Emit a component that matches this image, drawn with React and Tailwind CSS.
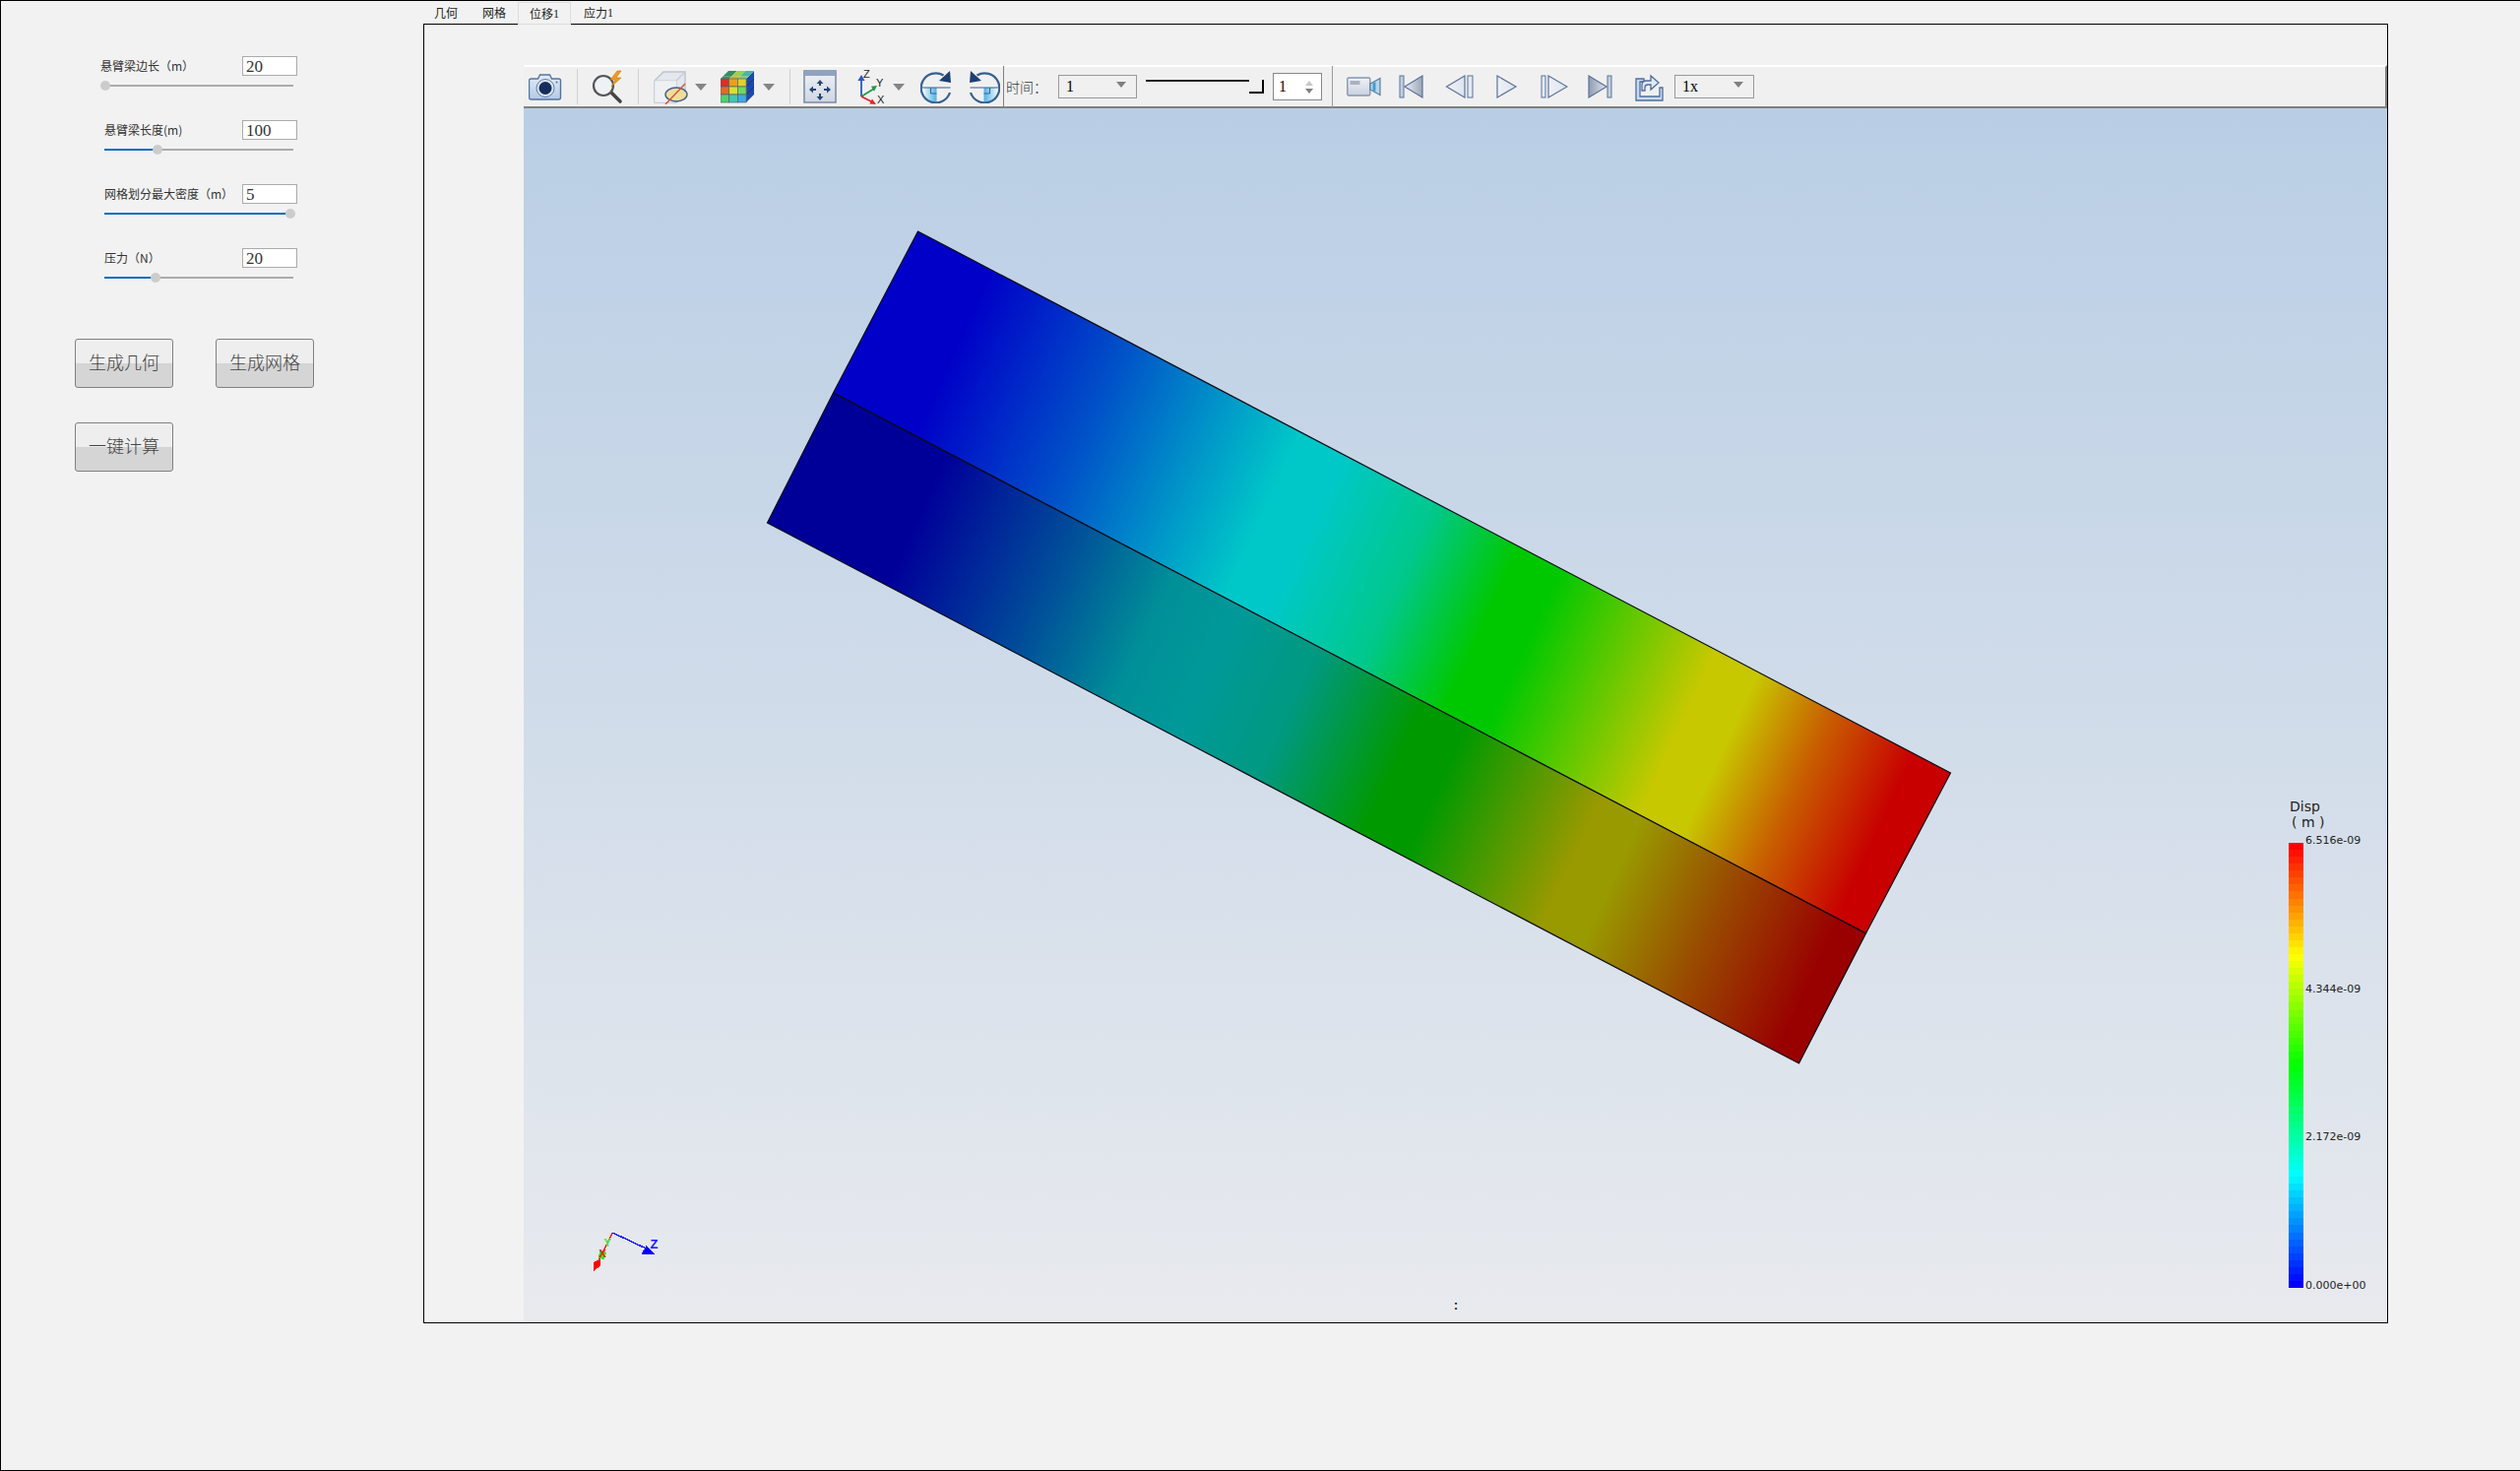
import React from 'react';

const cjk = "font-['Noto_Sans_CJK_SC',sans-serif]";
const serif = "font-['Liberation_Serif','Noto_Sans_CJK_SC',serif]";

const params = [
  { label: '悬臂梁边长（m）', value: '20', thumb: 1, pad: 'pl-0' },
  { label: '悬臂梁长度(m)', value: '100', thumb: 54, pad: 'pl-[4px]' },
  { label: '网格划分最大密度（m）', value: '5', thumb: 189, pad: 'pl-[4px]' },
  { label: '压力（N）', value: '20', thumb: 52, pad: 'pl-[4px]' },
];

const rainbow = (s) => {
  const c = (v) => Math.round(Math.max(0, Math.min(1, v)) * 255);
  const g = s < 0.25 ? s * 4 : s < 0.75 ? 1 : (1 - s) * 4;
  const b = s < 0.25 ? 1 : s < 0.5 ? (0.5 - s) * 4 : 0;
  const r = s < 0.5 ? 0 : s < 0.75 ? (s - 0.5) * 4 : 1;
  return `rgb(${c(r)},${c(g)},${c(b)})`;
};

const ParamRow = ({ label, value, thumb, pad }) => (
  <div className="flex flex-col">
    <div className="flex items-center justify-between h-[20px]">
      <span className={`${pad} ${cjk} text-[12px] leading-none text-[#333]`}>{label}</span>
      <div className={`w-[56px] h-[20px] bg-white border border-[#aaa] pl-[3px] pt-px ${serif} text-[17px] leading-[18px] text-[#333]`}>{value}</div>
    </div>
    <div className="relative ml-[4px] mt-[9px] w-[192px] h-[2px] bg-[#aaa]">
      <div className="h-full bg-[#0f6cbd]" style={{ width: thumb }} />
      <div className="absolute top-[-4px] w-[10px] h-[10px] rounded-full bg-[#ccc]" style={{ left: thumb - 5 }} />
    </div>
  </div>
);

const ActionButton = ({ children }) => (
  <button className={`w-[100px] h-[50px] pb-[3px] rounded-[3px] border border-[#808080] bg-[linear-gradient(#eeeeee_50%,#d5d5d5_50%)] ${cjk} font-light text-[18px] text-[#444]`}>
    {children}
  </button>
);

const Sep = ({ className }) => <div className={`w-px h-[36px] bg-[#d0d0d0] ${className}`} />;

const Caret = ({ className }) => (
  <svg width="12" height="7" viewBox="0 0 12 7" className={`${className} shrink-0`}><path d="M0 0h12L6 7z" fill="#858585" /></svg>
);

const Combo = ({ width, text, caretClass }) => (
  <div className={`${width} h-[24px] border border-[#999] flex items-center justify-between ${serif} text-[16px] text-black`}>
    <span className="pl-[7px] leading-none">{text}</span>
    <svg width="10" height="6" viewBox="0 0 10 6" className={caretClass}><path d="M0 0h10L5 6z" fill="#808080" /></svg>
  </div>
);

const CameraIcon = () => (
  <svg width="34" height="28" viewBox="0 0 34 28" className="ml-[5px] shrink-0">
    <defs>
      <linearGradient id="camBody" x1="0" y1="0" x2="0" y2="1"><stop offset="0" stopColor="#e3ecf7" /><stop offset="1" stopColor="#b4c9e3" /></linearGradient>
    </defs>
    <path d="M2.5 6h7l2-4h10l2 4h7a2 2 0 0 1 2 2v17a2 2 0 0 1-2 2h-28a2 2 0 0 1-2-2V8a2 2 0 0 1 2-2z" fill="url(#camBody)" stroke="#5273a0" strokeWidth="1.4" />
    <circle cx="17" cy="15.5" r="9" fill="#d9e4f2" stroke="#5f7ea8" />
    <circle cx="17" cy="15.5" r="6.5" fill="#152c5c" />
    <circle cx="28.5" cy="9.5" r="1" fill="#5273a0" />
  </svg>
);

const LightningLensIcon = () => (
  <svg width="36" height="36" viewBox="0 0 36 36" className="ml-[13px] shrink-0">
    <path d="M18 21l3 3 9 9" stroke="#444" strokeWidth="3.6" strokeLinecap="round" fill="none" />
    <circle cx="13" cy="17" r="10" fill="#eef2f6" stroke="#555" strokeWidth="2.2" />
    <path d="M27 2l-7 9h5l-4 7 10-9h-5l5-7z" fill="#ef9a1e" stroke="#c9741a" strokeWidth="0.6" />
  </svg>
);

const ClipBoxIcon = () => (
  <svg width="36" height="36" viewBox="0 0 36 36" className="ml-[14px] shrink-0">
    <path d="M2 12l9-9h22v22l-9 9H2z" fill="#e4e8ee" stroke="#bcc3ce" strokeWidth="1.4" />
    <path d="M2 12h22v22M24 12l9-9" fill="none" stroke="#c4cad4" strokeWidth="1.2" />
    <path d="M2 12h22v22H2z" fill="#f2f3f6" opacity="0.7" />
    <ellipse cx="24" cy="26" rx="11" ry="7" fill="#f0dc9c" stroke="#3f5f8a" strokeWidth="1.4" />
    <path d="M13 36L33 15" stroke="#d2552c" strokeWidth="1.4" />
  </svg>
);

const ColorCubeIcon = () => {
  const cells = [
    ['#d8302c', '#e8a020', '#e0d030'],
    ['#e06a28', '#d8e030', '#70d860'],
    ['#50d070', '#40c8b0', '#40a8e8'],
  ];
  return (
    <svg width="34" height="34" viewBox="0 0 34 34" className="ml-[14px] shrink-0">
      <path d="M26 9l8-8v24l-8 8z" fill="#1d4aa8" />
      <path d="M26 17l8-8M26 25l8-8" stroke="#10306c" strokeWidth="0.8" />
      <path d="M0 9l2.7-2.7h8.7L8.7 9z" fill="#3f8f78" />
      <path d="M8.7 9l2.7-2.7h8.7L17.4 9z" fill="#c9b33a" />
      <path d="M17.4 9l2.7-2.7h8.7L26 9z" fill="#7ecf6a" />
      <path d="M2.7 6.3L8 1h8.7l-5.3 5.3z" fill="#3a8a5c" />
      <path d="M11.4 6.3L16.7 1h8.7l-5.3 5.3z" fill="#9bcf55" />
      <path d="M20.1 6.3L25.4 1H34l-5.2 5.3z" fill="#49b6a6" />
      {cells.map((row, r) => row.map((fill, c) => (
        <rect key={`${r}-${c}`} x={c * 8.7} y={9 + r * 8} width="8.7" height="8" fill={fill} stroke="#5a5f66" strokeWidth="0.7" />
      )))}
    </svg>
  );
};

const FitIcon = () => (
  <svg width="34" height="34" viewBox="0 0 34 34" className="ml-[13px] shrink-0">
    <defs>
      <linearGradient id="fitBody" x1="0" y1="0" x2="0" y2="1"><stop offset="0" stopColor="#eef1f6" /><stop offset="1" stopColor="#cfd6e2" /></linearGradient>
    </defs>
    <rect x="1" y="1" width="32" height="32" fill="url(#fitBody)" stroke="#7d8fa9" strokeWidth="1.6" />
    <rect x="1" y="1" width="32" height="5" fill="#8fa3c0" />
    <path d="M17 10l-3.4 4h2.4v2h2v-2h2.4zM17 31l-3.4-4h2.4v-3h2v3h2.4zM6 20l4-3.4v2.4h3v2h-3v2.4zM28 20l-4-3.4v2.4h-3v2h3v2.4z" fill="#27456f" />
  </svg>
);

const TriadIcon = () => (
  <svg width="30" height="36" viewBox="0 0 30 36" className="ml-[20px] shrink-0">
    <path d="M5 28V10" stroke="#2a58c0" strokeWidth="1.8" />
    <path d="M5 6l-3.6 6h7.2z" fill="#2a58c0" />
    <path d="M5 28l13-8" stroke="#1d9a4a" strokeWidth="1.8" />
    <path d="M21 17l-6 .8 3 5z" fill="#1d9a4a" />
    <path d="M5 28l12 6" stroke="#e0262a" strokeWidth="1.8" />
    <path d="M20 36l-6.6-.4 2.6-5z" fill="#e0262a" />
    <text x="7" y="9" className="font-['Liberation_Sans',sans-serif]" fontSize="11" fill="#222">Z</text>
    <text x="20" y="18" className="font-['Liberation_Sans',sans-serif]" fontSize="11" fill="#222">Y</text>
    <text x="21" y="35" className="font-['Liberation_Sans',sans-serif]" fontSize="11" fill="#222">X</text>
  </svg>
);

const RotateIcon = ({ id, flip, className }) => (
  <svg width="32" height="34" viewBox="0 0 32 34" className={`${className} shrink-0 ${flip ? '-scale-x-100' : ''}`}>
    <defs>
      <linearGradient id={id} x1="0" y1="0" x2="1" y2="0"><stop offset="0" stopColor="#ffffff" /><stop offset="1" stopColor="#4fb0e6" /></linearGradient>
    </defs>
    <path d="M1.5 18h15v14.5A14.5 14.5 0 0 1 1.5 18z" fill={`url(#${id})`} />
    <path d="M10.5 18v6h6" fill="none" stroke="#35608f" strokeWidth="1" />
    <path d="M1.5 18h29" stroke="#35608f" strokeWidth="1" />
    <path d="M23.5 5.5A15 15 0 1 0 30 23" fill="none" stroke="#35608f" strokeWidth="2.2" />
    <path d="M30 1l1 12-12-2z" fill="#1d3f72" />
  </svg>
);

const VideoIcon = () => (
  <svg width="36" height="22" viewBox="0 0 36 22" className="ml-[14px] shrink-0">
    <defs>
      <linearGradient id="vidBody" x1="0" y1="0" x2="0" y2="1"><stop offset="0" stopColor="#f0f2f6" /><stop offset="1" stopColor="#c9d1de" /></linearGradient>
    </defs>
    <rect x="0.8" y="2" width="23" height="18" rx="1.5" fill="url(#vidBody)" stroke="#8395b0" strokeWidth="1.4" />
    <rect x="3.5" y="5" width="10" height="4" fill="#a9b2bf" />
    <path d="M24 8l10-5.5v17L24 14z" fill="#b9d6e8" stroke="#5d7ba2" strokeWidth="1.2" />
    <path d="M28 6.5v9" stroke="#3f9ed4" strokeWidth="3" />
  </svg>
);

const PlayerIcon = ({ kind, id, className }) => {
  const width = { start: 25, prev: 32, play: 23, next: 28, end: 25 }[kind];
  return (
    <svg width={width} height="24" viewBox={`0 0 ${width} 24`} className={`${className} shrink-0`}>
      <defs>
        <linearGradient id={id} x1="0" y1="0" x2="1" y2="0">
          <stop offset="0" stopColor={kind === 'end' ? '#8f9cb0' : '#eef1f6'} />
          <stop offset="1" stopColor={kind === 'start' ? '#98a5b8' : '#dfe5ee'} />
        </linearGradient>
      </defs>
      {kind === 'start' && <><rect x="1" y="1" width="4" height="22" fill="#c5cfdf" stroke="#5b7299" /><path d="M24 1v22L6 12z" fill={`url(#${id})`} stroke="#5b7299" strokeWidth="1.2" /></>}
      {kind === 'prev' && <><path d="M20 1v22L1.5 12z" fill={`url(#${id})`} stroke="#5b7299" strokeWidth="1.2" /><rect x="23" y="1" width="5" height="22" fill="#e4e9f1" stroke="#5b7299" /></>}
      {kind === 'play' && <path d="M1 1v22l19-11z" fill={`url(#${id})`} stroke="#5b7299" strokeWidth="1.2" />}
      {kind === 'next' && <><rect x="1" y="1" width="4" height="22" fill="#e4e9f1" stroke="#5b7299" /><path d="M8 1v22l19-11z" fill={`url(#${id})`} stroke="#5b7299" strokeWidth="1.2" /></>}
      {kind === 'end' && <><path d="M1 1v22l18-11z" fill={`url(#${id})`} stroke="#5b7299" strokeWidth="1.2" /><rect x="20" y="1" width="4" height="22" fill="#c5cfdf" stroke="#5b7299" /></>}
    </svg>
  );
};

const ExportIcon = () => (
  <svg width="30" height="30" viewBox="0 0 30 30" className="ml-[22px] shrink-0">
    <path d="M2 7h8v3H6v15h20v-9h3v13H2z" fill="#c9dbf0" stroke="#4d6d9b" strokeWidth="1.3" />
    <path d="M8 19v-6c0-3 2-4 5-4h4V4l8 7-8 7v-5h-3c-2 0-3 1-3 3v3z" fill="#dfe9f6" stroke="#4d6d9b" strokeWidth="1.3" />
  </svg>
);

const Toolbar = () => (
  <div className="h-[44px] shrink-0 flex items-center bg-[#f0f0f0] border-t-2 border-t-white border-b-2 border-b-[#808080] border-r-2 border-r-[#808080]">
    <CameraIcon />
    <Sep className="ml-[15px]" />
    <LightningLensIcon />
    <Sep className="ml-[12px]" />
    <ClipBoxIcon />
    <Caret className="ml-[7px]" />
    <ColorCubeIcon />
    <Caret className="ml-[9px]" />
    <Sep className="ml-[15px]" />
    <FitIcon />
    <TriadIcon />
    <Caret className="ml-[7px]" />
    <RotateIcon id="rotA" className="ml-[16px]" />
    <RotateIcon id="rotB" flip className="ml-[17px]" />
    <div className="w-px h-[42px] bg-[#808080] ml-[3px]" />
    <span className={`ml-[2px] ${cjk} font-light text-[14px] leading-none text-[#333] whitespace-nowrap`}>时间：</span>
    <div className="ml-[11px]"><Combo width="w-[80px]" text="1" caretClass="mr-[10px] -mt-[5px]" /></div>
    <div className="relative ml-[9px] w-[120px] h-[14px]">
      <div className="h-[2px] w-[106px] bg-[#222]" />
      <div className="absolute right-0 top-0 w-[15px] h-[14px] border-r-2 border-b-2 border-black bg-[#f0f0f0]" />
    </div>
    <div className="ml-[9px] w-[50px] h-[28px] bg-white border border-[#888] flex items-center justify-between pl-[5px] pr-[8px]">
      <span className={`${serif} text-[16px] leading-none text-[#300]`}>1</span>
      <div className="flex flex-col gap-[3px]">
        <svg width="8" height="5" viewBox="0 0 8 5"><path d="M0 5h8L4 0z" fill="#c8c8c8" /></svg>
        <svg width="8" height="5" viewBox="0 0 8 5"><path d="M0 0h8L4 5z" fill="#808080" /></svg>
      </div>
    </div>
    <div className="w-px h-[42px] bg-[#9a9a9a] ml-[10px]" />
    <VideoIcon />
    <PlayerIcon kind="start" id="pStart" className="ml-[17px]" />
    <PlayerIcon kind="prev" id="pPrev" className="ml-[22px]" />
    <PlayerIcon kind="play" id="pPlay" className="ml-[20px]" />
    <PlayerIcon kind="next" id="pNext" className="ml-[22px]" />
    <PlayerIcon kind="end" id="pEnd" className="ml-[20px]" />
    <ExportIcon />
    <div className="ml-[11px]"><Combo width="w-[81px]" text="1x" caretClass="mr-[10px] -mt-[5px]" /></div>
  </div>
);

const Beam = () => (
  <svg viewBox="532 110 1892 1233" className="block w-full h-full">
    <defs>
      {/* isolines lean a little off the end edges, so the vector is tilted */}
      <linearGradient id="topFace" gradientUnits="userSpaceOnUse" x1="932" y1="235" x2="2011" y2="733">
        <stop offset="0.07" stopColor="#0000c8" />
        <stop offset="0.2" stopColor="#0050c8" />
        <stop offset="0.3" stopColor="#0098c8" />
        <stop offset="0.37" stopColor="#00c8c8" />
        <stop offset="0.41" stopColor="#00c8c8" />
        <stop offset="0.5" stopColor="#00c88c" />
        <stop offset="0.58" stopColor="#00c800" />
        <stop offset="0.62" stopColor="#00c800" />
        <stop offset="0.71" stopColor="#78c800" />
        <stop offset="0.77" stopColor="#c8c800" />
        <stop offset="0.81" stopColor="#c8c800" />
        <stop offset="0.88" stopColor="#c86000" />
        <stop offset="0.96" stopColor="#c80000" />
      </linearGradient>
      <linearGradient id="sideFace" gradientUnits="userSpaceOnUse" x1="846" y1="399" x2="1925" y2="897">
        <stop offset="0.11" stopColor="#000099" />
        <stop offset="0.24" stopColor="#005099" />
        <stop offset="0.33" stopColor="#009098" />
        <stop offset="0.39" stopColor="#009999" />
        <stop offset="0.47" stopColor="#009980" />
        <stop offset="0.57" stopColor="#009900" />
        <stop offset="0.61" stopColor="#009900" />
        <stop offset="0.74" stopColor="#999900" />
        <stop offset="0.78" stopColor="#999900" />
        <stop offset="0.87" stopColor="#994c00" />
        <stop offset="0.97" stopColor="#990000" />
      </linearGradient>
    </defs>
    <polygon points="932,235 1981,785 1895,948 846,399" fill="url(#topFace)" stroke="#0a0a14" strokeWidth="1.2" />
    <polygon points="846,399 1895,948 1827,1080 779,531" fill="url(#sideFace)" stroke="#0a0a14" strokeWidth="1.2" />

    <g shapeRendering="crispEdges">
      <path d="M622 1252L603 1289" stroke="#ff1010" strokeWidth="1.4" />
      <path d="M622 1252L660 1270" stroke="#0000ff" strokeWidth="1.4" />
      <path d="M656 1265l9 9-14 0z" fill="#0000ff" />
      <path d="M609 1279l-7 3-0 10 8-7z" fill="#ff0000" />
      <path d="M609 1270l7 2-3 7-6-1z" fill="#22ee22" />
    </g>
    <text x="660" y="1268" fontSize="13" fontWeight="700" fill="#1018ff" className="font-['Liberation_Sans',sans-serif]">Z</text>
    <text x="613" y="1266" fontSize="11" fontWeight="700" fill="#33ee33" className="font-['Liberation_Sans',sans-serif]">Y</text>
    <text x="608" y="1277" fontSize="11" fontWeight="700" fill="#ff1010" className="font-['Liberation_Sans',sans-serif]">X</text>
  </svg>
);

const Legend = () => {
  const bands = Array.from({ length: 64 }, (_, i) => 1 - i / 63);
  const ticks = [
    { text: '6.516e-09', y: 'top-[36px]' },
    { text: '4.344e-09', y: 'top-[187px]' },
    { text: '2.172e-09', y: 'top-[337px]' },
    { text: '0.000e+00', y: 'top-[488px]' },
  ];
  return (
    <div className="absolute left-[1793px] top-[701px] w-[100px] font-['DejaVu_Sans',sans-serif] text-[#222]">
      <div className="text-[14px] leading-[16px] pl-px">Disp</div>
      <div className="text-[14px] leading-[16px] pl-[3px] whitespace-pre">( m )</div>
      <div className="mt-[13px] w-[15px] h-[452px] flex flex-col">
        {bands.map((s) => <div key={s} className="flex-1" style={{ backgroundColor: rainbow(s) }} />)}
      </div>
      {ticks.map((t) => (
        <div key={t.text} className={`absolute left-[17px] ${t.y} text-[11px] leading-[14px] whitespace-nowrap`}>{t.text}</div>
      ))}
    </div>
  );
};

export default function App() {
  return (
    <div className="w-[2560px] h-[1494px] bg-[#f2f2f2] border-l border-t border-b border-black flex overflow-hidden">
      <div className="w-[429px] shrink-0 flex flex-col">
        <div className="ml-[101px] mt-[56px] w-[200px] flex flex-col gap-[34px]">
          {params.map((p) => <ParamRow key={p.label} {...p} />)}
        </div>
        <div className="ml-[75px] mt-[61px] flex gap-[43px]">
          <ActionButton>生成几何</ActionButton>
          <ActionButton>生成网格</ActionButton>
        </div>
        <div className="ml-[75px] mt-[35px] flex">
          <ActionButton>一键计算</ActionButton>
        </div>
      </div>

      <div className="w-[1996px] shrink-0 flex flex-col">
        <div className={`h-[23px] flex items-end -ml-px ${cjk} text-[12px] text-[#222]`}>
          <div className="h-[22px] px-[12px] flex items-center mr-px">几何</div>
          <div className="h-[22px] px-[12px] flex items-center">网格</div>
          <div className="relative z-10 -mb-px h-[23px] px-[11px] flex items-center border border-[#dddddd] bg-[#f2f2f2]">
            位移<span className={serif}>1</span>
          </div>
          <div className="h-[22px] px-[12px] flex items-center ml-px">应力<span className={serif}>1</span></div>
        </div>
        <div className="h-[1320px] border border-black pt-[41px] pl-[101px] flex flex-col">
          <Toolbar />
          <div className="relative flex-1 min-h-0 bg-[linear-gradient(#b9cee5,#e8eaee)]">
            <Beam />
            <Legend />
            <span className="absolute left-[945px] top-[1210px] font-['Liberation_Sans',sans-serif] font-bold text-[12px] leading-none text-black">:</span>
          </div>
        </div>
      </div>
    </div>
  );
}
